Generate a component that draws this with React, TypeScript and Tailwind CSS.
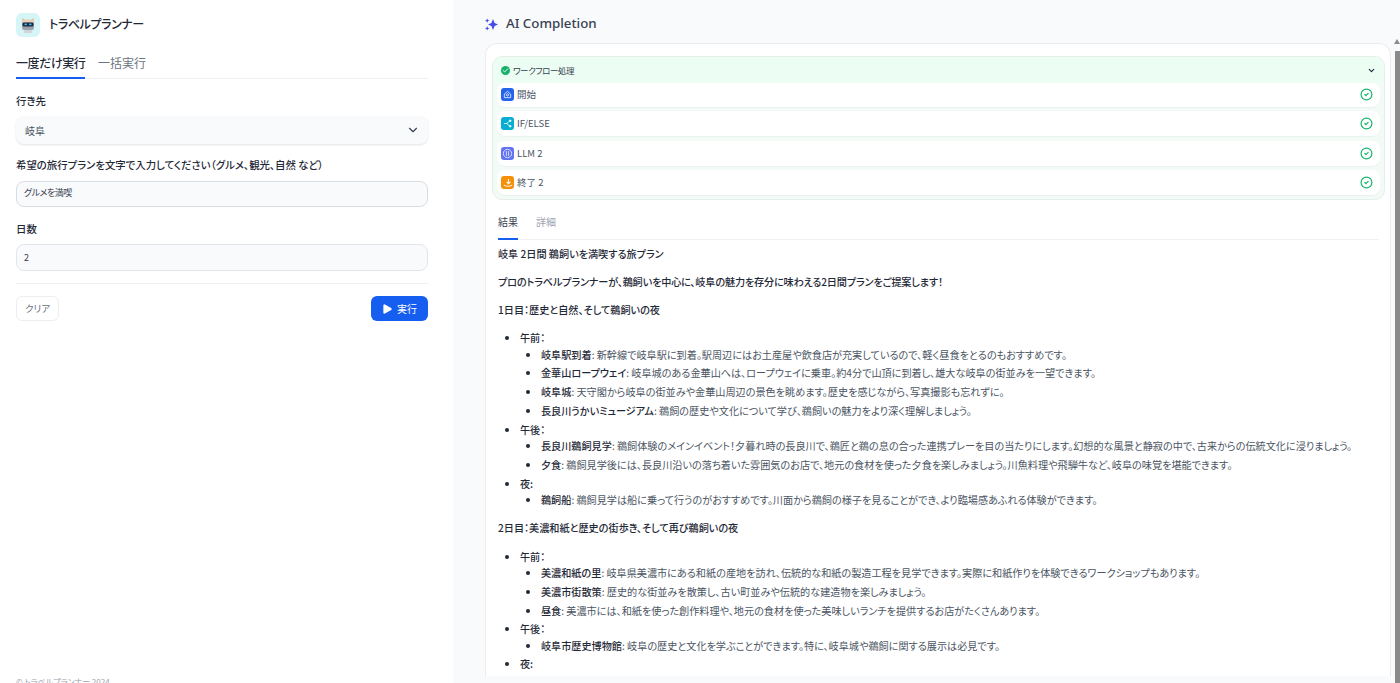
import { ChevronDown, Play, CircleCheck, Check } from 'lucide-react';

type Item = { head: string; body?: string };
type Group = { title: string; items: Item[] };

const day1: Group[] = [
  {
    title: '午前：',
    items: [
      { head: '岐阜駅到着', body: ': 新幹線で岐阜駅に到着。駅周辺にはお土産屋や飲食店が充実しているので、軽く昼食をとるのもおすすめです。' },
      { head: '金華山ロープウェイ', body: ': 岐阜城のある金華山へは、ロープウェイに乗車。約4分で山頂に到着し、雄大な岐阜の街並みを一望できます。' },
      { head: '岐阜城', body: ': 天守閣から岐阜の街並みや金華山周辺の景色を眺めます。歴史を感じながら、写真撮影も忘れずに。' },
      { head: '長良川うかいミュージアム', body: ': 鵜飼の歴史や文化について学び、鵜飼いの魅力をより深く理解しましょう。' },
    ],
  },
  {
    title: '午後：',
    items: [
      { head: '長良川鵜飼見学', body: ': 鵜飼体験のメインイベント！夕暮れ時の長良川で、鵜匠と鵜の息の合った連携プレーを目の当たりにします。幻想的な風景と静寂の中で、古来からの伝統文化に浸りましょう。' },
      { head: '夕食', body: ': 鵜飼見学後には、長良川沿いの落ち着いた雰囲気のお店で、地元の食材を使った夕食を楽しみましょう。川魚料理や飛騨牛など、岐阜の味覚を堪能できます。' },
    ],
  },
  {
    title: '夜:',
    items: [
      { head: '鵜飼船', body: ': 鵜飼見学は船に乗って行うのがおすすめです。川面から鵜飼の様子を見ることができ、より臨場感あふれる体験ができます。' },
    ],
  },
];

const day2: Group[] = [
  {
    title: '午前：',
    items: [
      { head: '美濃和紙の里', body: ': 岐阜県美濃市にある和紙の産地を訪れ、伝統的な和紙の製造工程を見学できます。実際に和紙作りを体験できるワークショップもあります。' },
      { head: '美濃市街散策', body: ': 歴史的な街並みを散策し、古い町並みや伝統的な建造物を楽しみましょう。' },
      { head: '昼食', body: ': 美濃市には、和紙を使った創作料理や、地元の食材を使った美味しいランチを提供するお店がたくさんあります。' },
    ],
  },
  {
    title: '午後：',
    items: [
      { head: '岐阜市歴史博物館', body: ': 岐阜の歴史と文化を学ぶことができます。特に、岐阜城や鵜飼に関する展示は必見です。' },
    ],
  },
  { title: '夜:', items: [] },
];

function PlanList({ groups }: { groups: Group[] }) {
  return (
    <ul className="list-disc pl-[22px] my-[9.5px]">
      {groups.map((g, i) => (
        <li key={i} className="marker:text-[#1f2937]">
          <span className="font-medium text-[#1f2937]">{g.title}</span>
          {g.items.length > 0 && (
            <ul className="list-disc pl-[21px] -mt-[2.5px]">
              {g.items.map((it) => (
                <li key={it.head} className="marker:text-[#1f2937]">
                  <span className="font-medium text-[#1f2937]">{it.head}</span>
                  <span>{it.body}</span>
                </li>
              ))}
            </ul>
          )}
        </li>
      ))}
    </ul>
  );
}

function RobotLogo() {
  return (
    <svg width="18" height="18" viewBox="0 0 18 18">
      <path d="M3.5 2 L6 4 H12 L14.5 2 L14 6 H4 Z" fill="#e0a060" />
      <rect x="3" y="4" width="12" height="10" rx="2" fill="#9ca3af" />
      <rect x="3" y="3.6" width="12" height="3" rx="1" fill="#e8d2b8" />
      <rect x="3.5" y="6.5" width="11" height="4" rx="1.5" fill="#1f2937" />
      <rect x="5.5" y="7.6" width="2.4" height="1.6" fill="#38bdf8" />
      <rect x="10.1" y="7.6" width="2.4" height="1.6" fill="#38bdf8" />
      <rect x="5" y="14" width="8" height="3" rx="1" fill="#d1d5db" />
    </svg>
  );
}

function SparkIcon() {
  return (
    <svg width="13" height="13" viewBox="0 0 13 13" fill="#444ce7">
      <path d="M8 1 9.6 4.9 13 6.5 9.6 8.1 8 12 6.4 8.1 3 6.5 6.4 4.9z" />
      <path d="M2.2 0.5 2.9 2 4.4 2.6 2.9 3.2 2.2 4.7 1.5 3.2 0 2.6 1.5 2z" />
      <path d="M2.2 8.3 2.9 9.8 4.4 10.4 2.9 11 2.2 12.5 1.5 11 0 10.4 1.5 9.8z" />
    </svg>
  );
}

function NodeIcon({ kind }: { kind: 'start' | 'branch' | 'llm' | 'end' }) {
  if (kind === 'start') {
    return (
      <span className="w-[13px] h-[13px] rounded-[3px] bg-[#2563eb] flex items-center justify-center">
        <svg width="9" height="9" viewBox="0 0 10 10" fill="none" stroke="#dbeafe" strokeWidth="1">
          <path d="M1.5 4.5 5 1.5l3.5 3V8.5h-7z" />
          <circle cx="5" cy="5.4" r="1.2" />
        </svg>
      </span>
    );
  }
  if (kind === 'branch') {
    return (
      <span className="w-[13px] h-[13px] rounded-[3px] bg-[#06aed4] flex items-center justify-center">
        <svg width="9" height="9" viewBox="0 0 10 10" fill="#fff" stroke="#fff" strokeWidth="0.8">
          <path d="M1 5h4M7.5 2 4 5l3.5 3" fill="none" />
          <circle cx="8" cy="2" r="1" />
          <circle cx="8" cy="8" r="1" />
        </svg>
      </span>
    );
  }
  if (kind === 'llm') {
    return (
      <span className="w-[13px] h-[13px] rounded-[3px] bg-[#6172f3] flex items-center justify-center">
        <svg width="11" height="11" viewBox="0 0 10 10" fill="none" stroke="#e0e7ff" strokeWidth="0.8">
          <circle cx="5" cy="5" r="3.8" />
          <path d="M4 2.8v4.4M6 2.8v4.4" />
        </svg>
      </span>
    );
  }
  return (
    <span className="w-[13px] h-[13px] rounded-[3px] bg-[#f79009] flex items-center justify-center">
      <svg width="10" height="10" viewBox="0 0 10 10" fill="none" stroke="#fff" strokeWidth="1.1">
        <path d="M5.5 1v4.5M3.6 3.8 5.5 5.7 7.4 3.8" />
        <path d="M1 7c1 1.6 7 1.6 8 0" />
      </svg>
    </span>
  );
}

const nodes = [
  { kind: 'start' as const, label: '開始', cls: 'h-[24px]' },
  { kind: 'branch' as const, label: 'IF/ELSE', cls: 'h-[25px]' },
  { kind: 'llm' as const, label: 'LLM 2', cls: 'h-[25px]' },
  { kind: 'end' as const, label: '終了 2', cls: 'h-[25px]' },
];

export default function App() {
  return (
    <div className="relative h-screen w-full flex overflow-hidden bg-[#f9fafc] text-[#374151] text-[10.4px] font-['Noto_Sans_CJK_JP','Noto_Sans',sans-serif] [font-feature-settings:'palt']">
      {/* Left form */}
      <aside className="w-[453px] shrink-0 bg-white flex flex-col pl-[16px] pr-[25px] *:shrink-0">
        <div className="flex items-center gap-[9px] h-[26px] mt-[12px]">
          <span className="w-[24px] h-[24px] rounded-[6px] bg-[#d5f5f6] flex items-center justify-center">
            <RobotLogo />
          </span>
          <span className="text-[12px] tracking-[-0.4px] -translate-y-px font-medium text-[#1f2937]">トラベルプランナー</span>
        </div>

        <div className="flex gap-[13px] mt-[14px] border-b border-[#eff1f5] h-[27px] text-[12px] pt-[2px] whitespace-nowrap">
          <span className="h-[25px] w-[69px] border-b-2 border-[#155eef] font-medium text-[#1f2937] text-center tracking-[-0.4px]">一度だけ実行</span>
          <span className="text-[#6b7280]">一括実行</span>
        </div>

        <label className="mt-[13px] h-[18px] leading-[18px] font-medium text-[#1f2937]">行き先</label>
        <div className="mt-[6px] h-[28px] rounded-lg bg-[#f9fafb] shadow-[0_1px_2px_rgba(16,24,40,0.12)] flex items-center justify-between pl-[9px] pr-[8px] text-[10px] text-[#4b5563]">
          <span>岐阜</span>
          <ChevronDown size={14} strokeWidth={2} className="text-[#374151]" />
        </div>

        <label className="mt-[12px] h-[18px] leading-[18px] font-medium text-[#1f2937]">希望の旅行プランを文字で入力してください（グルメ、観光、自然 など）</label>
        <div className="mt-[7px] h-[26px] rounded-lg bg-[#f9fafb] border border-[#d9dce3] flex items-center pl-[7px] text-[9px] tracking-[-0.5px] text-[#374151]">
          <span className="-translate-y-px">グルメを満喫</span>
        </div>

        <label className="mt-[13px] h-[18px] leading-[18px] font-medium text-[#1f2937]">日数</label>
        <div className="mt-[6px] h-[27px] rounded-lg bg-[#f9fafb] border border-[#e2e5eb] flex items-center pl-[7px] text-[9px] text-[#374151]">
          2
        </div>

        <div className="mt-[12px] border-t border-[#f0f1f4]" />

        <div className="mt-[12px] flex items-center justify-between">
          <button className="h-[25px] w-[43px] rounded-md border border-[#eceef2] bg-white text-[9.5px] text-[#6b7280]">クリア</button>
          <button className="h-[25px] w-[57px] rounded-md bg-[#155eef] text-white text-[10px] flex items-center justify-center gap-[5px]">
            <Play size={10} fill="#fff" strokeWidth={0} className="scale-125" />
            実行
          </button>
        </div>

        <div className="mt-[354px] text-[8px] leading-[14px] text-[#9ca3af] whitespace-nowrap">© トラベルプランナー 2024</div>
      </aside>

      {/* Result */}
      <main className="flex-1 min-w-0 flex flex-col pl-[32px] pr-[8px]">
        <div className="h-[43px] shrink-0 flex items-center gap-[8px] pt-[5px]">
          <SparkIcon />
          <span className="text-[13.3px] font-medium text-[#374151] font-['Noto_Sans','Noto_Sans_CJK_JP',sans-serif]">AI Completion</span>
        </div>

        <div className="w-[906px] h-[633px] overflow-hidden rounded-t-xl border border-[#eaecf0] border-b-0 bg-white pl-[6px] pr-[5px] pt-[12px]">
          <div className="rounded-[10px] border border-[#e5eeea] bg-[#f3fbf7] overflow-hidden">
            <div className="h-[26px] bg-[#ecfdf3] flex items-center justify-between pl-[8px] pr-[8px]">
              <span className="flex items-center gap-[3px] text-[8.5px] tracking-[-0.4px] text-[#374151]">
                <span className="w-[9px] h-[9px] rounded-full bg-[#17b26a] flex items-center justify-center">
                  <Check size={7} strokeWidth={3} className="text-white" />
                </span>
                ワークフロー処理
              </span>
              <ChevronDown size={9} strokeWidth={3} className="text-[#1f2937]" />
            </div>
            <div className="flex flex-col gap-[4.5px] px-[4px] pb-[4px] -mt-[0.5px]">
              {nodes.map((n) => (
                <div key={n.label} className={'bg-white rounded-lg flex items-center justify-between pl-[4px] pr-[7px] shadow-[0_1px_1px_rgba(16,24,40,0.04)] ' + n.cls}>
                  <span className="flex items-center gap-[3px] text-[9.5px] text-[#4b5563]">
                    <NodeIcon kind={n.kind} />
                    {n.label}
                  </span>
                  <CircleCheck size={13} strokeWidth={2.2} className="text-[#12b76a]" />
                </div>
              ))}
            </div>
          </div>

          <div className="ml-[6px] mr-[6px] mt-[8px] h-[32px] border-b border-[#f0f1f4] flex gap-[18px] text-[10px]">
            <span className="h-[32px] w-[20px] border-b-2 border-[#155eef] pt-[6px] text-[#374151] text-center">結果</span>
            <span className="pt-[6px] text-[#9ca3af]">詳細</span>
          </div>

          <div className="px-[6px] pt-[4.5px] leading-[18.8px] text-[10.15px] text-[#4b5563]">
            <p className="font-medium text-[#1f2937]">岐阜 2日間 鵜飼いを満喫する旅プラン</p>
            <p className="mt-[9.5px] font-medium text-[#1f2937] tracking-[-0.15px]">プロのトラベルプランナーが、鵜飼いを中心に、岐阜の魅力を存分に味わえる2日間プランをご提案します！</p>
            <p className="mt-[9.5px] font-medium text-[#1f2937]">1日目：歴史と自然、そして鵜飼いの夜</p>
            <PlanList groups={day1} />
            <p className="font-medium text-[#1f2937]">2日目：美濃和紙と歴史の街歩き、そして再び鵜飼いの夜</p>
            <PlanList groups={day2} />
          </div>
        </div>
      </main>

      {/* Scrollbar */}
      <div className="absolute right-0 top-[39px] w-[6px] h-[644px] flex flex-col items-end">
        <div className="w-0 h-0 border-x-[3px] border-x-transparent border-b-[5px] border-b-[#8a8a8a] mb-[7px]" />
        <div className="w-[5px] flex-1 bg-[#8a8a8a]" />
      </div>
    </div>
  );
}
